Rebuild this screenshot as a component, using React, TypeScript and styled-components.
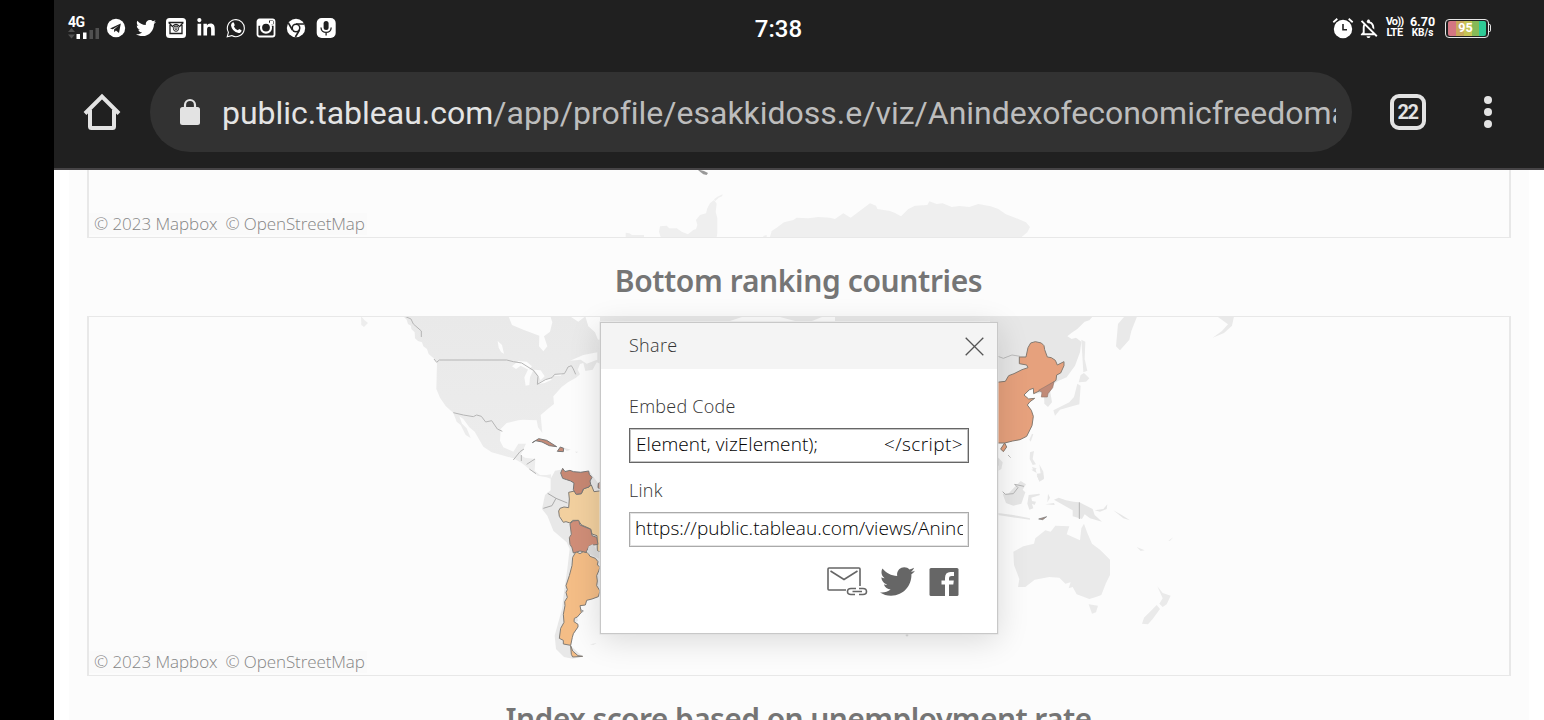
import React from "react";
import styled, { createGlobalStyle } from "styled-components";
import { FaTwitter, FaLinkedinIn } from "react-icons/fa";
import { MdOutlineNotificationsOff } from "react-icons/md";

const GlobalStyle = createGlobalStyle`
  * { box-sizing: border-box; }
  body { margin: 0; background: #000; overflow: hidden; }
`;

const Screen = styled.div`
  display: flex;
  width: 1544px;
  height: 720px;
  overflow: hidden;
  background: #000;
  font-family: "Open Sans", sans-serif;
`;
const Phone = styled.div`
  margin-left: 54px;
  width: 1490px;
  height: 720px;
  display: flex;
  flex-direction: column;
`;
const StatusBar = styled.div`
  flex: none;
  height: 56px;
  padding: 0 53px 0 14px;
  background: #202020;
  color: #fff;
  display: grid;
  grid-template-columns: 1fr 62px 1fr;
  align-items: center;
  font-family: Roboto, sans-serif;
`;
const StatusGroup = styled.div<{ $end?: boolean }>`
  display: flex;
  align-items: center;
  justify-content: ${(p) => (p.$end ? "flex-end" : "flex-start")};
  svg { display: block; flex: none; }
`;
const AppIcons = styled.div`
  display: flex;
  gap: 10px;
  margin-left: 6px;
`;
const Signal = styled.div`
  width: 32px;
  height: 22px;
  display: flex;
  flex-direction: column;
  font: 700 14px/11px Roboto, sans-serif;
  letter-spacing: -0.5px;
  svg { margin-top: -1px; }
`;
const Clock = styled.div`
  font-size: 24px;
  font-weight: 500;
  letter-spacing: 0.1px;
  line-height: 30px;
  text-align: center;
  padding: 2px 2px 0 0;
  white-space: nowrap;
`;
const Tiny = styled.div<{ $w: number; $ml: number; $size: number }>`
  width: ${(p) => p.$w}px;
  margin-left: ${(p) => p.$ml}px;
  font-size: ${(p) => p.$size}px;
  font-weight: 700;
  line-height: 10px;
  text-align: center;
  white-space: nowrap;
  small { display: block; font-size: 10px; line-height: 12px; }
`;
const Volte = styled(Tiny)`
  letter-spacing: -0.8px;
  small { font-size: 11px; letter-spacing: -0.5px; }
`;
const Battery = styled.div`
  margin-left: 9px;
  width: 44px;
  height: 19px;
  padding: 1px 2px;
  border: 1.5px solid #e6e6e6;
  border-radius: 4px;
  display: flex;
`;
const Charge = styled.div`
  width: 38px;
  border-radius: 2px;
  background: linear-gradient(90deg, #d37682 0 21%, #c9a85c 21% 41%, #c6c455 41% 63%, #86b957 63% 82%, #2fcb97 82%);
  font-size: 12.5px;
  font-weight: 700;
  line-height: 14px;
  text-align: center;
  padding-right: 2px;
`;
const BatteryTip = styled.div`
  width: 2.5px;
  height: 8px;
  border: 1.5px solid #e6e6e6;
  border-left: 0;
  border-radius: 0 3px 3px 0;
`;
const Toolbar = styled.div`
  flex: none;
  height: 114px;
  background: #202020;
  border-bottom: 2px solid #464446;
  display: flex;
  align-items: center;
  padding-left: 28px;
  svg { display: block; flex: none; }
`;
const UrlPill = styled.div`
  margin-left: 28px;
  width: 1202px;
  height: 80px;
  border-radius: 40px;
  background: #323232;
  display: flex;
  align-items: center;
  padding: 0 16px 0 29px;
`;
const UrlText = styled.div`
  margin-left: 21px;
  flex: 1;
  overflow: hidden;
  white-space: nowrap;
  font: 400 32px/44px Roboto, sans-serif;
  letter-spacing: -0.01px;
  color: #bdbdbd;
  padding-top: 1px;
  b { font-weight: 400; color: #e4e4e4; }
`;
const TabCount = styled.div`
  margin-left: 38px;
  width: 36px;
  height: 36px;
  border: 4px solid #e3e3e3;
  border-radius: 9px;
  color: #e3e3e3;
  font: 700 20px/29px Roboto, sans-serif;
  text-align: center;
  letter-spacing: -1.4px;
  padding-right: 1px;
`;
const Menu = styled.div`
  margin-left: 58px;
  display: flex;
  flex-direction: column;
  gap: 4px;
`;
const Dot = styled.i`
  width: 8px;
  height: 8px;
  border-radius: 50%;
  background: #e3e3e3;
`;
const Page = styled.main`
  position: relative;
  flex: 1;
  min-height: 0;
  background: #fff;
  padding: 0 15px;
  overflow: hidden;
`;
const Dashboard = styled.div`
  height: 100%;
  background: #fcfcfc;
  padding: 0 18px;
  overflow: hidden;
`;
const MapPanel = styled.section<{ $height: number; $top?: boolean }>`
  height: ${(p) => p.$height}px;
  border: solid #e8e8e8;
  border-width: ${(p) => (p.$top ? "1.5px" : "0")} 2px 1.5px 2px;
  display: grid;
  align-items: end;
  & > * { grid-area: 1 / 1; }
  svg { display: block; align-self: start; }
`;
const Attribution = styled.div`
  justify-self: start;
  width: 278px;
  height: 22px;
  background: #fafafa;
  padding-left: 5px;
  margin-bottom: 2px;
  display: flex;
  gap: 8px;
  font: 300 17px/22px "Open Sans", sans-serif;
  color: #858585;
  white-space: nowrap;
`;
const Credit = styled.span<{ $spacing: number }>`
  letter-spacing: ${(p) => p.$spacing}px;
`;
const Title = styled.h2<{ $spacing: number }>`
  margin: 0;
  height: 78px;
  font: 600 30px/86px "Noto Sans", sans-serif;
  letter-spacing: ${(p) => p.$spacing}px;
  color: #757575;
  text-align: center;
  white-space: nowrap;
  padding-right: 1px;
`;
const Dialog = styled.div`
  position: absolute;
  left: 546px;
  top: 152px;
  width: 398px;
  height: 312px;
  border: 1px solid #c8c8c8;
  background: #fff;
  box-shadow: 0 0 0 0.5px #ddd, 0 6px 30px rgba(0, 0, 0, 0.14);
`;
const DialogHeader = styled.header`
  height: 46px;
  background: #f4f4f4;
  display: flex;
  align-items: center;
  justify-content: space-between;
  padding: 0 13px 2px 28px;
  font: 300 18px/44px "Open Sans", sans-serif;
  letter-spacing: 0.3px;
  color: #333;
  svg { margin-top: 2px; }
`;
const DialogBody = styled.div`
  padding: 24px 28px 0;
`;
const Label = styled.div`
  height: 35px;
  font: 300 18px/26px "Open Sans", sans-serif;
  letter-spacing: 0.25px;
  color: #333;
`;
const Field = styled.div<{ $focus?: boolean }>`
  width: 340px;
  height: 35px;
  margin-bottom: 14px;
  border: 1px solid ${(p) => (p.$focus ? "#666" : "#aaa")};
  box-shadow: inset 0 0 0 1px ${(p) => (p.$focus ? "#c4c4c4" : "#e4e4e4")};
  padding: 0 5px;
  display: flex;
  justify-content: space-between;
`;
const FieldText = styled.div<{ $spacing?: number; $ml?: number }>`
  overflow: hidden;
  white-space: pre;
  font: 300 19px/30px "Open Sans", sans-serif;
  letter-spacing: ${(p) => p.$spacing ?? 0}px;
  margin-left: ${(p) => p.$ml ?? 0}px;
  color: #000;
`;
const ShareRow = styled.div`
  display: flex;
  justify-content: flex-end;
  align-items: center;
  padding: 3px 10px 0 0;
  gap: 12px;
  color: #666;
  svg:last-child { margin-left: 2px; }
`;

const TelegramIcon = () => (
  <svg width="20" height="20" viewBox="0 0 20 20">
    <circle cx="10" cy="10" r="9.2" fill="#fff" />
    <path d="M4 10.4 14.8 5.4 13 15 9.9 12.6 8.3 14.3 8 11.6 12.8 7.4 6.8 11.2Z" fill="#202020" />
  </svg>
);
const MailBadgeIcon = () => (
  <svg width="20" height="20" viewBox="0 0 20 20">
    <rect width="20" height="20" rx="3.5" fill="#fff" />
    <g fill="none" stroke="#202020" strokeWidth="1.3">
      <path d="M2.5 4.5H17.5M3 5 7 9M17 5 13 9M4 7V15.5H16V7" />
      <path d="M7 8Q10 5 13 8" />
      <circle cx="10" cy="10.7" r="2.6" strokeWidth="1" />
      <circle cx="10" cy="10.7" r="1" strokeWidth=".8" />
    </g>
  </svg>
);
const CameraIcon = () => (
  <svg width="20" height="20" viewBox="0 0 20 20" fill="none">
    <rect x="1.5" y="1.5" width="17" height="17" rx="2" stroke="#fff" strokeWidth="1.8" />
    <path d="M1.5 7H5.5M14.5 7H18.5" stroke="#fff" strokeWidth="1.5" />
    <path d="M2 2H13V5H7L5 7H2Z" fill="#fff" />
    <circle cx="10" cy="9.6" r="5" stroke="#fff" strokeWidth="2.2" fill="#202020" />
    <rect x="14" y="3" width="3" height="3" fill="#fff" />
  </svg>
);
const ChromeIcon = () => (
  <svg width="20" height="20" viewBox="0 0 20 20">
    <circle cx="10" cy="10" r="9.2" fill="#fff" />
    <circle cx="10" cy="10" r="4.5" fill="#202020" />
    <circle cx="10" cy="10" r="3" fill="#fff" />
    <path d="M10 6H18.4M6.4 12 2.4 5M13.5 12 9.4 19" stroke="#202020" strokeWidth="1.6" />
  </svg>
);
const MicIcon = () => (
  <svg width="20" height="20" viewBox="0 0 20 20">
    <rect x="0.7" width="19" height="20" rx="5" fill="#fff" />
    <rect x="7.6" y="3" width="5" height="9" rx="2.5" fill="#202020" />
    <path d="M5 9.5C5 16 15.2 16 15.2 9.5M10.1 14.5V17.5" fill="none" stroke="#202020" strokeWidth="1.3" />
  </svg>
);
const ChatIcon = () => (
  <svg width="20" height="20" viewBox="0 0 20 20">
    <path d="M1.2 18.8 2.4 14.3A8.5 8.5 0 1 1 5.7 17.6Z" fill="none" stroke="#fff" strokeWidth="1.1" />
    <path d="M6.500 4.500Q7.500 4 8 5L8.700 7Q8.500 8 7.800 8.500 9.200 11.300 11.800 12.200L13.200 11 15.500 12.200Q15.500 15 12.500 15 6 13.500 5 7.500 5 5.500 6.500 4.500Z" fill="#fff" />
  </svg>
);
const AlarmIcon = () => (
  <svg width="22" height="22" viewBox="0 0 22 22">
    <circle cx="11" cy="12" r="9.2" fill="#fff" />
    <path d="M1.3 5.2 5.3 1.8M20.7 5.2 16.7 1.8" stroke="#fff" strokeWidth="1.8" />
    <path d="M11 7V12.7H15" fill="none" stroke="#202020" strokeWidth="1.6" />
  </svg>
);
const HomeIcon = () => (
  <svg width="40" height="40" viewBox="0 0 40 40" fill="none" stroke="#e3e3e3" strokeWidth="4">
    <path d="M3 21.5 20 4.5 37 21.5M8 18V34.5Q8 36 9.5 36H30.5Q32 36 32 34.5V18" />
  </svg>
);
const LockIcon = () => (
  <svg width="22" height="28" viewBox="0 0 22 28">
    <rect x="1" y="9" width="20" height="18" rx="2.5" fill="#e3e3e3" />
    <path d="M6 10V7A5 5 0 0 1 16 7V10" fill="none" stroke="#e3e3e3" strokeWidth="2.2" />
  </svg>
);
const CloseIcon = () => (
  <svg width="19" height="19" viewBox="0 0 19 19" stroke="#555" strokeWidth="1.3">
    <path d="M.7.7 18.3 18.3M18.3.7.7 18.3" />
  </svg>
);
const MailLinkIcon = () => (
  <svg width="41" height="30" viewBox="0 0 41 30" fill="none" stroke="#666" strokeWidth="1.6">
    <path d="M19 23H2Q1 23 1 22V2Q1 1 2 1H32Q33 1 33 2V19M3.5 4 17 12.5 30.5 4" />
    <path d="M29 21.5H24Q20.5 21.5 20.5 24.5T24 27.5H28M32 21.5H36Q39.5 21.5 39.5 24.5T36 27.5H32M25.5 24.5H35" />
  </svg>
);
const FacebookIcon = () => (
  <svg width="30" height="28" viewBox="0 0 30 28">
    <rect x="0.5" width="29" height="28" rx="1.5" fill="#666" />
    <path d="M16 28V16.5H12.5V12.5H16V10Q16 4 21.5 4H25V8H22.5Q20 8 20 10V12.5H24.8L24.3 16.5H20V28Z" fill="#fff" />
  </svg>
);

/* Antarctic coast at the foot of the upper map. */
const UpperMap = () => (
  <svg width="1419" height="67" viewBox="89 170 1419 67">
    <g transform="translate(600 165) scale(.33333)" fill="#efefef">
      <path d="M294 15 300 15 312 18 324 24 320 30 310 28 302 22Z" fill="#999" />
      <path d="M77 216V203L88 205 96 210 132 210V216Z" />
      <path d="M182 216 177 200 180 184 200 182 208 190 230 190 245 200 264 208 280 195 288 192 292 180 288 165 300 150 318 145 322 130 330 115 342 105 350 116 347 140 352 160 352 205 350 216Z" />
      <path d="M342 103 352 95 368 88 366 94 356 98 346 108ZM490 213 500 210V216H490Z" />
      <path d="M510 216 515 198 530 188 552 172 580 165 590 158 625 160 655 156 690 158 705 162 730 145 752 158 770 145 790 130 810 115 828 122 832 132 870 138 885 144 903 154 925 132 945 122 982 120 988 109 1010 117 1028 115 1055 126 1078 123 1108 126 1135 117 1172 124 1195 132 1218 148 1245 158 1278 172 1290 186 1282 202 1265 216Z" />
    </g>
  </svg>
);

const LowerMap = () => (
  <svg width="1419" height="357" viewBox="89 318 1419 357">
    <defs>
      <linearGradient id="land" x1="0" x2="0" y1="0" y2="1">
        <stop offset="0" stopColor="#e9e9e9" />
        <stop offset="1" stopColor="#ededed" />
      </linearGradient>
    </defs>
    {/* North and Central America */}
    <g transform="translate(350 310) scale(.33333)" strokeLinejoin="round">
      <path fill="#ededed" d="M33 22 44 34 54 42 42 54 34 48Z" />
      <path fill="url(#land)" d="M156 18 170 32 174 45 183 50 184 60 194 70 195 88 204 96 216 100 220 112 231 120 236 135 250 147 261 160 259 240 270 266 287 291 310 312 320 338 332 348 347 378 362 387 350 358 336 344 328 322 340 330 358 355 374 368 400 413 425 430 490 448 515 462 540 482 563 500 590 505 604 510 603 496 590 498 570 498 554 485 556 450 525 446 512 438 528 404 505 404 490 428 460 415 450 395 452 360 470 342 505 334 518 332 560 334 564 355 577 372 574 340 572 318 596 298 612 285 610 262 635 234 654 220 678 206 690 196 683 182 690 165 700 162 706 186 728 182 740 160 760 168V90L744 92 735 70 715 52 706 22 685 38 660 22V18H600L607 40 600 68 582 82 592 112 580 127 567 112 568 80 520 62 486 48 474 18Z" />
      <path fill="#fcfcfc" d="M443 96 456 108 462 134 454 130 446 116ZM486 172 505 156 530 158 546 172 535 182 512 170 498 180ZM527 230 523 205 535 180 550 184 540 205 538 228ZM552 182 572 184 584 202 572 214 564 198ZM562 225 580 212 602 206 605 212 584 222ZM610 200 638 192 632 200Z" />
      <path fill="#fcfcfc" d="M660 155 700 138 742 130 742 152 710 164 692 152Z" />
      <path fill="#e8e8e8" d="M635 414 662 422 650 426ZM675 428 684 428 680 432Z" />
      <path fill="none" stroke="#b5b5b5" strokeWidth="3" d="M165 22 183 30 190 45 214 66 214 84M252 150 260 160 268 153 470 153 490 158 515 162 550 184 564 202 562 226 586 212 606 206 614 196 643 194 648 186 654 174 664 170 670 180 677 196M310 311 340 318 370 323 380 318 394 322 407 339 425 335 442 360 457 367M490 453 510 428 522 420M514 438 514 456M530 466 555 450M538 480 558 494" />
      <path fill="#c58a76" stroke="#777" strokeWidth="3" d="M547 401 566 389 590 394 620 413 598 410 576 399 557 395ZM622 427 631 414 641 418 640 428Z" />
    </g>
    {/* South America */}
    <g transform="translate(520 460) scale(.33333)" strokeLinejoin="round">
      <path fill="#e8e8e8" d="M122 32 105 35 92 60 92 94 75 108 66 150 82 170 100 215 140 250 149 270 142 330 132 400 126 450 104 530 108 570 132 594 158 599 190 593 152 560 240 410V80L210 40Z" />
      <path fill="none" stroke="#aaa" strokeWidth="3" d="M83 103 108 118 142 132M70 148 96 140 108 118" />
      <path fill="#fcfcfc" d="M240 412 200 424 196 438 180 440 184 460 172 474 174 486 161 493 174 504 157 535 152 560 188 592 260 592V412Z" />
      <path fill="#f4bd86" stroke="#817b75" strokeWidth="3" d="M168 278 180 284 190 278 204 282 210 292 226 298 234 308 232 318 240 324 236 336 230 350 232 366 230 380 240 396 235 413 216 420 200 424 196 438 180 440 184 460 172 474 163 478 162 488 174 496 174 504 160 524 157 535 152 559 130 555 130 544 118 538 122 508 132 490 130 466 135 440 134 428 142 415 138 400 142 392 138 380 148 350 156 320 158 295ZM152 560 158 576 174 590 188 592 158 594 154 586Z" />
      <path fill="#f2d09f" stroke="#817b75" strokeWidth="3" d="M146 100 164 96 172 106 184 104 192 88 206 84 214 78 222 98 238 96 245 96V280L232 276 231 230 216 225 212 210 185 198 174 184 158 184 150 192 138 188 130 190 118 172 116 156 120 148 132 144 146 146 148 120Z" />
      <path fill="#d08e78" stroke="#817b75" strokeWidth="3" d="M150 194 160 186 176 184 180 198 212 211 216 230 230 235 234 256 208 260 198 280 180 276 160 282 156 266 150 256 148 236 154 226Z" />
      <path fill="#c78873" stroke="#777" strokeWidth="3" d="M128 28 135 38 150 34 160 38 182 40 206 36 208 46 216 55 210 66 212 76 207 84 190 90 184 104 168 106 160 92 162 72 152 66 140 62 128 58 122 42ZM244 68 235 73 234 86 244 92Z" />
      <path fill="none" stroke="#999" strokeWidth="3" d="M182 452 190 456 184 461" />
      <path fill="#ebebeb" d="M210 556 230 552 220 558ZM388 644 392 648 386 648Z" />
      <path fill="#ddd" d="M202 282 206 262 218 256 232 276 240 280V300Z" />
    </g>
    {/* Northern coasts above the dialog */}
    <path fill="#e9e9e9" d="M600 318H742L730 322H600ZM780 318 795 322H812L822 318ZM835 318H998V322H835Z" />
    {/* East Asia */}
    <g transform="translate(990 310) scale(.33333)" strokeLinejoin="round">
      <path fill="#e7e7e7" d="M0 20H310L298 34 284 38 262 60 244 72 232 82 245 90 258 86 274 98 270 130 255 170 230 205 204 216 192 224 180 244 186 280 174 294 163 284 162 255H0Z" />
      <path fill="#e9e9e9" d="M384 45 402 24 442 20 424 66 418 92 390 124 378 112ZM274 92 286 98 284 150 292 185 280 190ZM272 198 282 192 298 208 288 218 266 220ZM262 224 272 230 268 286 238 294 210 302 195 320 190 304 214 292 238 280 252 264ZM684 24 700 22 732 22 726 50 702 72 668 86 696 66 714 46Z" />
      <path fill="none" stroke="#bbb" strokeWidth="3" d="M24 142 40 148 66 138 90 142" />
      <path fill="#fcfcfc" d="M102 258 130 238 131 254 160 252 162 284 124 290 112 270Z" />
      <path fill="#e6a17d" stroke="#85796f" strokeWidth="3" d="M20 220 46 217 56 200 72 194 96 182 114 176 110 168 88 164 88 144 108 144 114 116 122 102 136 98 154 102 162 110 164 122 172 144 184 146 196 154 202 168 222 158 222 170 212 192 200 198 198 214 160 240 131 254 130 238 118 242 102 258 116 270 134 268 120 278 112 288 124 304 130 322 126 350 110 382 90 392 68 396 44 402 20 402ZM44 402 50 414 40 428 32 420Z" />
      <path fill="#c18a77" stroke="#94796e" strokeWidth="2" d="M192 218 188 236 174 254 172 264 154 264 156 250 146 244 160 236Z" />
      <path fill="#e8e8e8" d="M118 392 126 374 130 376 122 398ZM120 430 132 426 128 450 138 466 128 468 119 450ZM126 474 140 478 132 488ZM148 466 160 488 162 508 148 516 140 500 152 496ZM24 445 38 460 34 480 24 486Z" />
      <path fill="none" stroke="#999" strokeWidth="2" d="M54 438 62 446M24 448V470" />
    </g>
    {/* Indonesia, Australia and New Zealand */}
    <g transform="translate(990 470) scale(.33333)">
      <path fill="#e6e6e6" d="M38 74 55 74 76 52 92 36 108 46 98 62 106 70 94 104 70 110 48 102ZM116 78 148 74 150 78 124 86 126 96 138 98 134 108 126 104 130 118 118 122 112 104ZM24 132 70 138 120 148 120 152 76 146 24 138ZM174 74 180 86 172 100ZM166 106 192 102 194 108ZM192 92 206 86 228 94 250 98 268 100 308 120 314 138 336 158 300 148 284 136 276 150 248 142 248 124 220 108ZM314 124 340 120 352 106 350 120 330 128ZM370 124 395 138 420 154 400 148ZM124 2 136 0 140 12ZM140 14 158 12 162 30 148 38Z" />
      <path fill="#eaeaea" d="M70 248 100 232 132 224 136 208 166 184 182 188 196 170 238 172 230 196 270 214 274 178 282 164 292 192 306 224 330 242 360 272 360 318 348 342 334 378 318 384 298 390 260 376 248 354 236 358 242 340 226 344 208 326 178 324 134 332 106 354 84 354 88 330 72 288ZM296 406 324 410 318 430 306 434ZM502 352 518 372 542 380 530 406 518 414 508 404 518 388ZM500 408 510 420 488 450 474 466 456 464 462 446ZM440 234 464 244 452 246ZM535 215 550 205 540 215Z" />
      <path fill="none" stroke="#b5b5b5" strokeWidth="3" d="M268 100V150M38 68 46 76 70 74 84 56 74 46 102 52" />
      <path fill="#a88c82" stroke="#777" strokeWidth="2" d="M146 150 170 143 158 152Z" />
    </g>
    <circle cx="907" cy="636" r="1.4" fill="#ddd" />
  </svg>
);

const Credits = () => (
  <Attribution>
    <Credit $spacing={-0.05}>© 2023 Mapbox</Credit>
    <Credit $spacing={-0.1}>© OpenStreetMap</Credit>
  </Attribution>
);

export default function App() {
  return (
    <Screen>
      <GlobalStyle />
      <Phone>
        <StatusBar>
          <StatusGroup>
            <Signal>
              4G
              <svg width="32" height="12" viewBox="0 0 32 12">
                <path d="M0 5 3.5 1 7 5ZM0 7.5 3.5 11.5 7 7.5ZM21.5 3H25V12H21.5ZM27.5 1H31V12H27.5Z" fill="#505050" />
                <path d="M8.5 7H12V12H8.500ZM15 5.500H18.500V12H15Z" fill="#fff" />
              </svg>
            </Signal>
            <AppIcons>
              <TelegramIcon />
              <FaTwitter size={20} />
              <MailBadgeIcon />
              <FaLinkedinIn size={20} />
              <ChatIcon />
              <CameraIcon />
              <ChromeIcon />
              <MicIcon />
            </AppIcons>
          </StatusGroup>
          <Clock>7:38</Clock>
          <StatusGroup $end>
            <AlarmIcon />
            <MdOutlineNotificationsOff size={23} style={{ marginLeft: 3 }} />
            <Volte $w={20} $ml={5} $size={11}>Vo))<small>LTE</small></Volte>
            <Tiny $w={26} $ml={5} $size={12.5}>6.70<small>KB/s</small></Tiny>
            <Battery><Charge>95</Charge></Battery>
            <BatteryTip />
          </StatusGroup>
        </StatusBar>
        <Toolbar>
          <HomeIcon />
          <UrlPill>
            <LockIcon />
            <UrlText><b>public.tableau.com</b>/app/profile/esakkidoss.e/viz/Anindexofeconomicfreedoma</UrlText>
          </UrlPill>
          <TabCount>22</TabCount>
          <Menu><Dot /><Dot /><Dot /></Menu>
        </Toolbar>
        <Page>
          <Dashboard>
            <MapPanel $height={68}><UpperMap /><Credits /></MapPanel>
            <Title $spacing={-0.38}>Bottom ranking countries</Title>
            <MapPanel $height={360} $top><LowerMap /><Credits /></MapPanel>
            <Title $spacing={-0.6}>Index score based on unemployment rate</Title>
          </Dashboard>
          <Dialog>
            <DialogHeader>Share<CloseIcon /></DialogHeader>
            <DialogBody>
              <Label>Embed Code</Label>
              <Field $focus>
                <FieldText $ml={1} $spacing={0.08}>Element, vizElement);</FieldText>
                <FieldText $spacing={0.4}>{"</script>"}</FieldText>
              </Field>
              <Label>Link</Label>
              <Field><FieldText $spacing={0.04}>https://public.tableau.com/views/Anindex</FieldText></Field>
              <ShareRow><MailLinkIcon /><FaTwitter size={35} /><FacebookIcon /></ShareRow>
            </DialogBody>
          </Dialog>
        </Page>
      </Phone>
    </Screen>
  );
}
